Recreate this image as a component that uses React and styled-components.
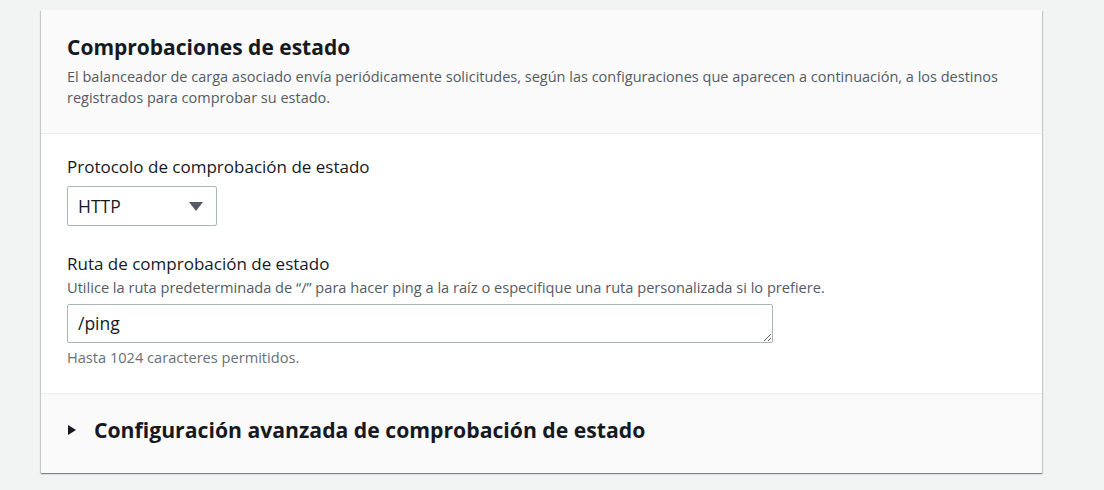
import React from "react";
import styled, { createGlobalStyle } from "styled-components";

const Global = createGlobalStyle`
  html, body { margin: 0; padding: 0; background: #f2f3f3; }
  body { font-family: "Open Sans", "Noto Sans", sans-serif; color: #16191f; }
  * { box-sizing: border-box; }
`;

const Page = styled.div`
  padding: 10px 0 0 41px;
  min-height: 490px;
`;

const Card = styled.section`
  width: 1001px;
  background: #ffffff;
  box-shadow: 0 1px 1px 0 rgba(0, 28, 36, 0.3), 1px 1px 1px 0 rgba(0, 28, 36, 0.15),
    -1px 1px 1px 0 rgba(0, 28, 36, 0.15);
`;

const Header = styled.header`
  background: #fafafa;
  border-bottom: 1px solid #eaeded;
  padding: 23px 26px 25px 26px;
`;

const Title = styled.h2`
  margin: 0;
  font-size: 21px;
  line-height: 28px;
  font-weight: 700;
  color: #16191f;
`;

const Desc = styled.p`
  margin: 5px 0 0;
  font-size: 14.5px;
  line-height: 21px;
  color: #545b64;
`;

const Body = styled.div`
  padding: 22px 26px 26px 26px;
  display: flex;
  flex-direction: column;
`;

const Field = styled.div`
  display: flex;
  flex-direction: column;
  margin-top: ${(p) => p.$gap || 0}px;
`;

const Label = styled.label`
  font-size: 17px;
  line-height: 22px;
  color: #16191f;
`;

const Help = styled.div`
  font-size: 14.6px;
  line-height: 20px;
  color: ${(p) => (p.$muted ? "#687078" : "#545b64")};
  margin-top: ${(p) => p.$top || 0}px;
`;

const Select = styled.div`
  margin-top: 8px;
  width: 150px;
  height: 40px;
  border: 1px solid #aab7b8;
  border-radius: 2px;
  display: flex;
  align-items: center;
  justify-content: space-between;
  padding: 0 13px 0 10px;
  font-size: 17.5px;
  color: #16191f;
  background: #fff;
`;

const Caret = styled.span`
  width: 0;
  height: 0;
  border-left: 7px solid transparent;
  border-right: 7px solid transparent;
  border-top: 9px solid #545b64;
`;

const TextArea = styled.textarea`
  margin-top: 7px;
  width: 706px;
  height: 39px;
  border: 1px solid #aab7b8;
  border-radius: 2px;
  padding: 7px 10px;
  font-family: "Open Sans", "Noto Sans", sans-serif;
  font-size: 17.5px;
  line-height: 22px;
  color: #16191f;
  resize: both;
  outline: none;
  overflow: hidden;
`;

const Footer = styled.div`
  background: #fafafa;
  border-top: 1px solid #eaeded;
  height: 80px;
  display: flex;
  align-items: center;
  padding: 0 26px 8px 26px;
  gap: 18px;
`;

const Arrow = styled.span`
  width: 0;
  height: 0;
  border-top: 5px solid transparent;
  border-bottom: 5px solid transparent;
  border-left: 8px solid #16191f;
  margin-left: 1px;
`;

const FooterTitle = styled.h3`
  margin: 0;
  font-size: 21.2px;
  line-height: 28px;
  font-weight: 700;
  color: #16191f;
`;

export default function App() {
  return (
    <>
      <Global />
      <Page>
        <Card>
          <Header>
            <Title>Comprobaciones de estado</Title>
            <Desc>
              El balanceador de carga asociado envía periódicamente solicitudes, según las configuraciones que aparecen a continuación, a los destinos registrados para comprobar su estado.
            </Desc>
          </Header>
          <Body>
            <Field>
              <Label>Protocolo de comprobación de estado</Label>
              <Select>
                <span>HTTP</span>
                <Caret />
              </Select>
            </Field>
            <Field $gap={27}>
              <Label>Ruta de comprobación de estado</Label>
              <Help $top={2}>
                Utilice la ruta predeterminada de “/” para hacer ping a la raíz o especifique una ruta personalizada si lo prefiere.
              </Help>
              <TextArea defaultValue="/ping" />
              <Help $muted $top={4}>Hasta 1024 caracteres permitidos.</Help>
            </Field>
          </Body>
          <Footer>
            <Arrow />
            <FooterTitle>Configuración avanzada de comprobación de estado</FooterTitle>
          </Footer>
        </Card>
      </Page>
    </>
  );
}
